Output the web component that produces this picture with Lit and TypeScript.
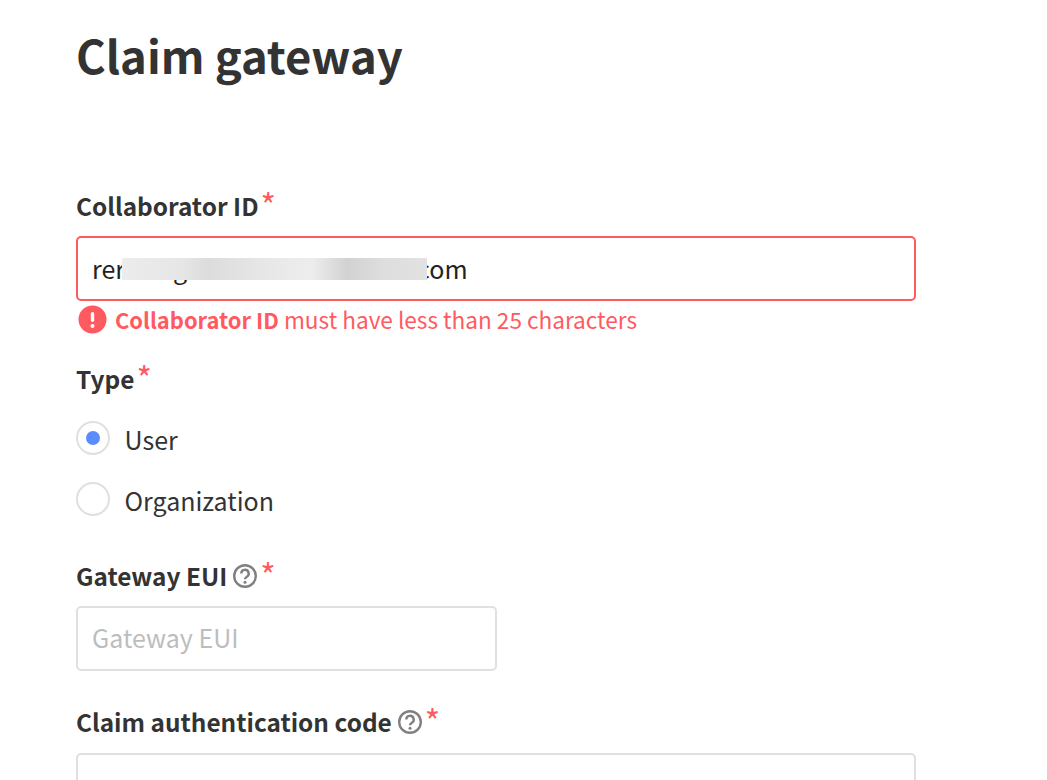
import { LitElement, html, css } from "lit";
import { customElement } from "lit/decorators.js";

const help = html`<svg class="help" viewBox="0 0 24 24" fill="none"><circle cx="12" cy="12" r="10.8" stroke="#808080" stroke-width="2.4"/><path d="M8.3 9.6a3.7 3.7 0 1 1 5.6 3.1c-1.2.7-1.9 1.3-1.9 2.6" stroke="#808080" stroke-width="2.4"/><circle cx="12" cy="18.2" r="1.5" fill="#808080"/></svg>`;

@customElement("app-root")
export class AppRoot extends LitElement {
  static styles = css`
    :host { display: block; height: 780px; overflow: hidden; background: #fff; font-family: "Noto Sans CJK SC", "Noto Sans", sans-serif; color: #333; }
    .page { padding: 23px 0 0 76px; width: 840px; }
    h1 { margin: 0 0 104px; font-size: 45.4px; line-height: 62px; font-weight: 700; color: #333; }
    .label { display: flex; align-items: center; height: 32px; font-size: 24.4px; font-weight: 700; color: #333; }
    .req { color: #ff5a5f; font-size: 33px; font-weight: 400; line-height: 32px; margin-left: 2px; position: relative; top: -1px; }
    .help { flex: none; width: 24px; height: 24px; margin-left: 6px; position: relative; top: 1px; }
    .help + .req { margin-left: 3px; }
    .input { box-sizing: border-box; height: 65px; border: 2px solid #e0e0e0; border-radius: 5px; margin-top: 15px; padding: 0 14px 3px; display: flex; align-items: center; font-size: 25px; color: #222; }
    .input.err { border-color: #ff5a5f; position: relative; padding-bottom: 1px; }
    .input.last { margin-top: 16px; }
    .g { margin-left: 48px; }
    .com { margin-left: 230px; }
    .blur { position: absolute; left: 44px; top: 20px; width: 305px; height: 22px; background: linear-gradient(90deg, #ececec 0%, #e6e6e6 20%, #dcdcdc 28%, #e6e6e6 45%, #ededed 62%, #d2d2d2 74%, #dddddd 85%, #e2e2e2 100%); }
    .ph { color: #bdbdbd; }
    .short { width: 421px; }
    .error { display: flex; align-items: center; gap: 8px; height: 36px; color: #ff5a5f; font-size: 22.6px; }
    .error b { font-weight: 700; font-size: 21.9px; }
    .error svg { margin-left: 2px; }
    .radio { display: flex; align-items: center; gap: 14.5px; height: 34px; font-size: 25px; color: #333; }
    .radio-text { position: relative; top: 1px; }
    .dot { box-sizing: border-box; width: 34px; height: 34px; border: 2px solid #e0e0e0; border-radius: 50%; display: flex; align-items: center; justify-content: center; }
    .dot i { width: 14px; height: 14px; border-radius: 50%; background: #5b8cff; }
    .type { margin-top: 25px; }
    .user { margin-top: 27px; }
    .org { margin-top: 27px; }
    .eui { margin-top: 43px; }
    .code { margin-top: 34px; }
  `;

  render() {
    return html`<div class="page">
      <h1>Claim gateway</h1>
      <div class="label">Collaborator ID<span class="req">*</span></div>
      <div class="input err">rer<span class="g">g</span><span class="com">com</span><span class="blur"></span></div>
      <div class="error"><svg width="29" height="29" viewBox="0 0 29 29"><circle cx="14.5" cy="14.5" r="14" fill="#ff5a5f"/><rect x="12.8" y="7" width="3.4" height="10" rx="1.7" fill="#fff"/><circle cx="14.5" cy="21" r="2" fill="#fff"/></svg><span><b>Collaborator ID</b> must have less than 25 characters</span></div>
      <div class="label type">Type<span class="req">*</span></div>
      <div class="radio user"><span class="dot"><i></i></span><span class="radio-text">User</span></div>
      <div class="radio org"><span class="dot"></span><span class="radio-text">Organization</span></div>
      <div class="label eui">Gateway EUI${help}<span class="req">*</span></div>
      <div class="input short"><span class="ph">Gateway EUI</span></div>
      <div class="label code">Claim authentication code${help}<span class="req">*</span></div>
      <div class="input last"></div>
    </div>`;
  }
}
